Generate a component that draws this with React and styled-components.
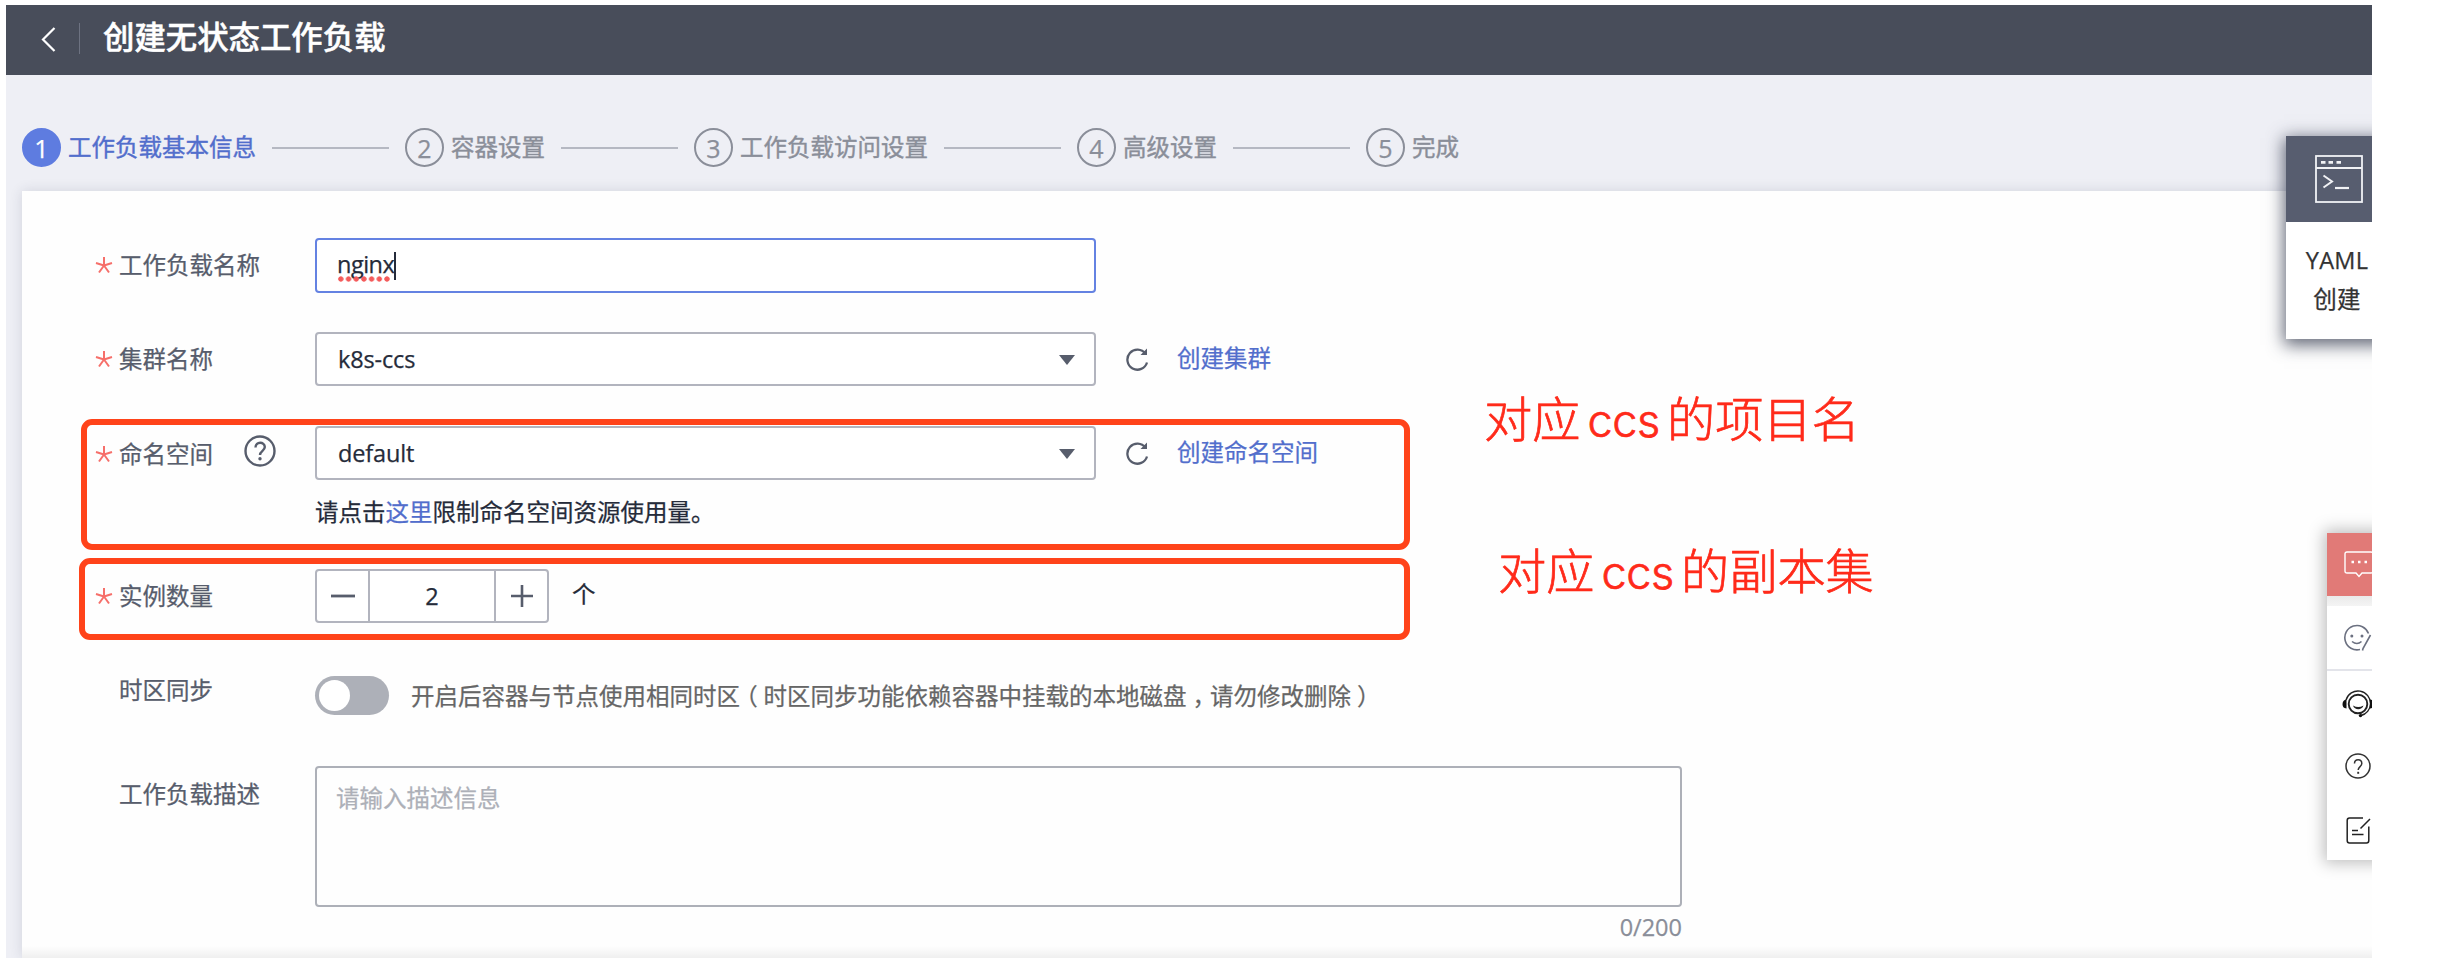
import React from "react";
import styled, { createGlobalStyle, css } from "styled-components";

const GlobalStyle = createGlobalStyle`
  * { box-sizing: border-box; }
  body {
    margin: 0;
    background: #fff;
    overflow: hidden;
    font-family: "Open Sans", "Noto Sans CJK SC", sans-serif;
    font-size: 23.5px;
    color: #252b3a;
    text-spacing-trim: space-all;
    -webkit-text-stroke: 0.25px currentColor;
  }
`;

const Page = styled.div`
  position: relative;
  width: 2440px;
  height: 958px;
  padding: 5px 68px 0 6px;
  overflow: hidden;
  background: #fff;
`;

const Shell = styled.div`
  position: relative;
  display: flex;
  flex-direction: column;
  height: 953px;
  background: #eeeff5;
  overflow: hidden;
`;

const Header = styled.header`
  display: flex;
  align-items: center;
  flex: none;
  height: 70px;
  padding-left: 35px;
  background: #484d5a;
  color: #fff;
`;

const HeaderDivider = styled.span`
  width: 1px;
  height: 31px;
  margin: 0 23px 4px 23px;
  background: #6d7281;
`;

const Title = styled.h1`
  margin: 0 0 6px;
  font-size: 31.4px;
  line-height: 40px;
  font-weight: 500;
  -webkit-text-stroke: 0.5px currentColor;
`;

const Steps = styled.ol`
  display: flex;
  align-items: center;
  flex: none;
  height: 39px;
  margin: 53px 0 24px;
  padding: 0 0 0 16px;
  list-style: none;
`;

const Step = styled.li`
  display: flex;
  align-items: center;
  color: ${(p) => (p.$active ? "#526ecc" : "#8a8e99")};
`;

const StepNumber = styled.span`
  display: flex;
  align-items: center;
  justify-content: center;
  width: 39px;
  height: 39px;
  margin-right: 7px;
  border-radius: 50%;
  border: 2px solid #8a8e99;
  font-size: 25px;
  line-height: 30px;
  ${(p) =>
    p.$active &&
    css`
      border-color: #5e7ce0;
      background: #5e7ce0;
      color: #fff;
    `}
`;

const StepText = styled.span`
  margin-top: -1px;
  line-height: 36px;
  white-space: nowrap;
  -webkit-text-stroke-width: 0.4px;
`;

const StepLine = styled.span`
  width: 117px;
  height: 2px;
  margin: 1px 16px 0 16px;
  background: #b5b8c2;
`;

const Panel = styled.main`
  position: relative;
  flex: 1;
  margin-left: 16px;
  padding-top: 47px;
  background: #fefefe;
  box-shadow: 0 0 12px rgba(40, 50, 80, 0.14);
`;

const FormRow = styled.div`
  display: flex;
  align-items: flex-start;
  height: ${(p) => p.$height}px;
  margin-bottom: ${(p) => p.$gap}px;
`;

const Label = styled.div`
  display: flex;
  align-items: center;
  flex: none;
  width: 293px;
  height: 34px;
  margin-top: ${(p) => p.$top}px;
  padding-left: 73px;
  color: #575d6c;
  line-height: 34px;
`;

const StarSlot = styled.span`
  display: flex;
  width: 24px;
`;

const HelpSlot = styled.span`
  display: flex;
  margin: -6px 0 0 31px;
`;

const Field = styled.div`
  display: flex;
  align-items: center;
  width: 781px;
  height: ${(p) => (p.$focused ? 55 : 54)}px;
  padding: 0 19px 0 ${(p) => (p.$focused ? 20 : 21)}px;
  border: 2px solid ${(p) => (p.$focused ? "#6482e2" : "#b2b4be")};
  border-radius: 4px;
  background: #fff;
  line-height: 34px;
  letter-spacing: -0.15px;
`;

const Typed = styled.span`
  position: relative;
  margin-top: -3px;
  letter-spacing: -0.5px;
`;

const SpellMarks = styled.span`
  position: absolute;
  left: 0;
  bottom: -1px;
  width: 54px;
  height: 6px;
  background: radial-gradient(circle at 50% 50%, #f45b5b 2.3px, transparent 3px) 0 0 / 7.7px 6px;
`;

const TextCursor = styled.span`
  width: 2px;
  height: 28px;
  background: #252b3a;
`;

const Caret = styled.span`
  width: 0;
  height: 0;
  margin: 1px 0 0 auto;
  border: 8px solid transparent;
  border-top: 10px solid #575d6c;
  border-bottom: 0;
`;

const RefreshSlot = styled.span`
  display: flex;
  margin: 15px 28px 0 29px;
`;

const Link = styled.a`
  color: #526ecc;
  line-height: 34px;
  ${(p) => p.$beside && "margin-top: 9px;"}
`;

const Stack = styled.div`
  display: flex;
  flex-direction: column;
`;

const Inline = styled.div`
  display: flex;
`;

const Hint = styled.div`
  margin-top: 15px;
  line-height: 34px;
`;

const Stepper = styled.div`
  display: flex;
  width: 234px;
  height: 54px;
  border: 2px solid #b2b4be;
  border-radius: 4px;
  background: #fff;
`;

const StepperCell = styled.div`
  display: flex;
  align-items: center;
  justify-content: center;
  flex: ${(p) => (p.$value ? "1" : "0 0 51px")};
  ${(p) => p.$value && "border: solid #b2b4be; border-width: 0 2px;"}
`;

const Unit = styled.span`
  margin: 8px 0 0 23px;
  line-height: 34px;
`;

const Toggle = styled.span`
  display: flex;
  align-items: center;
  width: 74px;
  height: 39px;
  padding-left: 4px;
  border-radius: 20px;
  background: #adb0b8;
`;

const Knob = styled.span`
  width: 31px;
  height: 31px;
  border-radius: 50%;
  background: #fff;
`;

const ToggleText = styled.span`
  display: flex;
  margin: 3px 0 0 22px;
  color: #666;
  line-height: 34px;
  white-space: nowrap;
`;

const Punct = styled.span`
  width: 1em;
  font-feature-settings: "halt";
  text-align: center;
`;

const TextArea = styled.div`
  width: 1367px;
  height: 141px;
  padding: 12px 19px;
  border: 2px solid #adb0b8;
  border-radius: 4px;
  color: #adb0b8;
  line-height: 36px;
`;

const Counter = styled.div`
  width: 1660px;
  margin-top: 3px;
  color: #8a8e99;
  line-height: 34px;
  text-align: right;
`;

const BottomFade = styled.div`
  position: absolute;
  left: 0;
  right: 0;
  bottom: 0;
  height: 12px;
  background: linear-gradient(rgba(0, 0, 0, 0), rgba(0, 0, 0, 0.06));
`;

const HighlightBox = styled.div`
  position: absolute;
  left: ${(p) => p.$x}px;
  top: ${(p) => p.$y}px;
  width: ${(p) => p.$w}px;
  height: ${(p) => p.$h}px;
  border: 6px solid #ff431a;
  border-radius: 11px;
`;

const Note = styled.div`
  position: absolute;
  left: ${(p) => p.$x}px;
  top: ${(p) => p.$y}px;
  display: flex;
  gap: 7px;
  color: #ff2a1a;
  font-family: Inter, "Noto Sans CJK SC", sans-serif;
  font-size: 48.2px;
  font-weight: 300;
  line-height: 60px;
  white-space: nowrap;
  -webkit-text-stroke-width: 0.7px;
`;

const NoteLatin = styled.span`
  margin-top: 1px;
  font-size: 45px;
  letter-spacing: -0.3px;
`;

const YamlCard = styled.aside`
  position: absolute;
  left: 2280px;
  top: 131px;
  width: 102px;
  height: 203px;
  background: #fff;
  box-shadow: 0 4px 16px 2px rgba(45, 52, 72, 0.75);
`;

const YamlHead = styled.div`
  height: 86px;
  padding: 19px 0 0 29px;
  background: #575d6f;
`;

const YamlText = styled.div`
  padding-top: 19px;
  color: #333;
  line-height: 39px;
  text-align: center;
  letter-spacing: 0.3px;
`;

const ToolBar = styled.aside`
  position: absolute;
  left: 2321px;
  top: 528px;
  display: flex;
  flex-direction: column;
  width: 60px;
  height: 327px;
  background: #fff;
  box-shadow: 0 0 15px 3px rgba(0, 0, 0, 0.26);
`;

const ToolItem = styled.div`
  display: flex;
  align-items: flex-start;
  height: ${(p) => p.$height}px;
  padding: ${(p) => p.$top}px 0 0 ${(p) => p.$left}px;
  ${(p) => p.$alert && "background: #e17a77;"}
  ${(p) => p.$line && "border-bottom: 2px solid #e3e4ea;"}
`;

const ToolGap = styled.div`
  height: 10px;
  background: linear-gradient(#eaeaea, #f4f4f4);
`;

const Star = () => (
  <svg width="18" height="18" viewBox="0 0 18 18" fill="none" stroke="#f66f6a" strokeWidth="2">
    <path d="M9 1v8.500M9 9.500L1 7M9 9.500L17 7M9 9.500L4 16.500M9 9.500L14 16.500" />
  </svg>
);

const BackIcon = () => (
  <svg width="15" height="26" viewBox="0 0 15 26" fill="none" stroke="#fff" strokeWidth="2.200">
    <path d="M13.500 1L2 12.500L13.500 24" />
  </svg>
);

const HelpIcon = () => (
  <svg width="32" height="32" viewBox="0 0 32 32" fill="none" stroke="#575d6c" strokeWidth="2.400">
    <circle cx="16" cy="16" r="14.500" />
    <path d="M11.500 12.500c0-6.500 9.300-6.200 9.300-.4 0 3.800-4.800 3.700-4.800 8" />
    <circle cx="16" cy="23.800" r="1.700" fill="#575d6c" stroke="none" />
  </svg>
);

const RefreshIcon = () => (
  <svg width="24" height="24" viewBox="0 0 24 24" fill="none" stroke="#575d6c" strokeWidth="2.300">
    <path d="M20.500 6.800A10 10 0 1 0 22 15.500" />
    <path d="M22 1.500V8h-6.500z" fill="#575d6c" stroke="none" />
  </svg>
);

const MinusIcon = () => (
  <svg width="24" height="24" viewBox="0 0 24 24" stroke="#575d6c" strokeWidth="2.800">
    <path d="M0 12h24" />
  </svg>
);

const PlusIcon = () => (
  <svg width="24" height="24" viewBox="0 0 24 24" stroke="#575d6c" strokeWidth="2.600">
    <path d="M1 12h22M12 1v22" />
  </svg>
);

const TerminalIcon = () => (
  <svg width="48" height="48" viewBox="0 0 48 48" fill="none" stroke="#f1f2f5" strokeWidth="1.800">
    <rect x="1" y="1" width="46" height="46" />
    <path d="M1 13h46" />
    <path d="M6 7.300h4.500M13.500 7.300H18M21.500 7.300H26" strokeWidth="2.800" />
    <path d="M8.500 20.500l8.500 6-8.500 6" strokeWidth="2" />
    <path d="M20 33h14" strokeWidth="2.200" />
  </svg>
);

const ChatIcon = () => (
  <svg width="30" height="27" viewBox="0 0 30 27" fill="none" stroke="#fff" strokeWidth="1.400">
    <path d="M3 1h24q2 0 2 2v17q0 2-2 2h-9l-3 3.500-3-3.500H3q-2 0-2-2V3q0-2 2-2z" />
    <path d="M7.500 11h2.500M14 11h2.500M20.500 11H23" strokeWidth="2.600" />
  </svg>
);

const SmileIcon = () => (
  <svg width="28" height="28" viewBox="0 0 28 28" fill="none" stroke="#6b7080" strokeWidth="1.600">
    <path d="M24.500 9.500A12.200 12.200 0 1 0 16 25.500" />
    <path d="M26.500 11L19 24.500l-.5 2" />
    <path d="M8 17.500q5 4 9.500 0" />
    <circle cx="7.800" cy="12" r="1.500" fill="#6b7080" stroke="none" />
    <circle cx="18" cy="12" r="1.500" fill="#6b7080" stroke="none" />
  </svg>
);

const HeadsetIcon = () => (
  <svg width="32" height="28" viewBox="0 0 32 28" fill="none" stroke="#222" strokeWidth="1.400">
    <path d="M4 10A12.500 12.500 0 0 1 28.500 14A12.500 12.500 0 0 1 19 25.500" />
    <circle cx="16" cy="14" r="9.300" strokeWidth="1.900" />
    <path d="M11 15.500q5.250 3 10.500 0c-1.500 5-9 5-10.500 0z" fill="#222" stroke="none" />
    <path d="M4.500 9.500v9C1.500 18.300.5 16.500.5 14.200S1.800 9.800 4.500 9.500zM28 9.500v9c3-.2 4-2 4-4.300s-1-4.400-4-4.700z" fill="#111" stroke="none" />
    <circle cx="18.500" cy="25.600" r="1.700" fill="#111" stroke="none" />
  </svg>
);

const QuestionIcon = () => (
  <svg width="26" height="26" viewBox="0 0 26 26" fill="none" stroke="#333" strokeWidth="1.500">
    <circle cx="13" cy="13" r="12" />
    <path d="M9.500 10.500c0-5 7.300-5 7.300 0 0 3.200-3.600 3-3.600 6.600" />
    <path d="M13.200 18.800v2" strokeWidth="1.900" />
  </svg>
);

const NoteIcon = () => (
  <svg width="25" height="27" viewBox="0 0 25 27" fill="none" stroke="#222" strokeWidth="1.500">
    <path d="M17 1H3.500Q1.200 1 1.200 3.500v20q0 2.500 2.300 2.500h17q2.300 0 2.300-2.500V9.500" />
    <path d="M24 2L14.500 11.500M6 13.500h6M6 17.500h11.500" />
  </svg>
);

const STEPS = ["工作负载基本信息", "容器设置", "工作负载访问设置", "高级设置", "完成"];

function FormLabel({ children, required, top, help }) {
  return (
    <Label $top={top}>
      <StarSlot>{required && <Star />}</StarSlot>
      {children}
      {help && (
        <HelpSlot>
          <HelpIcon />
        </HelpSlot>
      )}
    </Label>
  );
}

function Select({ value, action }) {
  return (
    <Inline>
      <Field>
        {value}
        <Caret />
      </Field>
      <RefreshSlot>
        <RefreshIcon />
      </RefreshSlot>
      <Link $beside>{action}</Link>
    </Inline>
  );
}

export default function App() {
  return (
    <Page>
      <GlobalStyle />
      <Shell>
        <Header>
          <BackIcon />
          <HeaderDivider />
          <Title>创建无状态工作负载</Title>
        </Header>
        <Steps>
          {STEPS.map((text, i) => (
            <Step key={text} $active={i === 0}>
              <StepNumber $active={i === 0}>{i + 1}</StepNumber>
              <StepText>{text}</StepText>
              {i < STEPS.length - 1 && <StepLine />}
            </Step>
          ))}
        </Steps>
        <Panel>
          <FormRow $height={55} $gap={39}>
            <FormLabel required top={10}>工作负载名称</FormLabel>
            <Field $focused>
              <Typed>
                nginx
                <SpellMarks />
              </Typed>
              <TextCursor />
            </Field>
          </FormRow>
          <FormRow $height={54} $gap={40}>
            <FormLabel required top={10}>集群名称</FormLabel>
            <Select value="k8s-ccs" action="创建集群" />
          </FormRow>
          <FormRow $height={103} $gap={40}>
            <FormLabel required top={11} help>命名空间</FormLabel>
            <Stack>
              <Select value="default" action="创建命名空间" />
              <Hint>
                请点击<Link>这里</Link>限制命名空间资源使用量。
              </Hint>
            </Stack>
          </FormRow>
          <FormRow $height={54} $gap={53}>
            <FormLabel required top={10}>实例数量</FormLabel>
            <Stepper>
              <StepperCell><MinusIcon /></StepperCell>
              <StepperCell $value>2</StepperCell>
              <StepperCell><PlusIcon /></StepperCell>
            </Stepper>
            <Unit>个</Unit>
          </FormRow>
          <FormRow $height={39} $gap={51}>
            <FormLabel top={-3}>时区同步</FormLabel>
            <Toggle><Knob /></Toggle>
            <ToggleText>
              开启后容器与节点使用相同时区<Punct>（</Punct>时区同步功能依赖容器中挂载的本地磁盘<Punct>，</Punct>请勿修改删除<Punct>）</Punct>
            </ToggleText>
          </FormRow>
          <FormRow $height={141} $gap={0}>
            <FormLabel top={11}>工作负载描述</FormLabel>
            <TextArea>请输入描述信息</TextArea>
          </FormRow>
          <Counter>0/200</Counter>
          <BottomFade />
        </Panel>
        <YamlCard>
          <YamlHead><TerminalIcon /></YamlHead>
          <YamlText>
            YAML
            <br />
            创建
          </YamlText>
        </YamlCard>
        <ToolBar>
          <ToolItem $alert $height={63} $top={18} $left={17}><ChatIcon /></ToolItem>
          <ToolGap />
          <ToolItem $line $height={65} $top={18} $left={17}><SmileIcon /></ToolItem>
          <ToolItem $height={60} $top={19} $left={15}><HeadsetIcon /></ToolItem>
          <ToolItem $height={64} $top={22} $left={18}><QuestionIcon /></ToolItem>
          <ToolItem $height={65} $top={22} $left={19}><NoteIcon /></ToolItem>
        </ToolBar>
      </Shell>
      <HighlightBox $x={81} $y={419} $w={1329} $h={131} />
      <HighlightBox $x={79} $y={558} $w={1331} $h={82} />
      <Note $x={1484} $y={390}>
        对应<NoteLatin>ccs</NoteLatin>的项目名
      </Note>
      <Note $x={1498} $y={542}>
        对应<NoteLatin>ccs</NoteLatin>的副本集
      </Note>
    </Page>
  );
}
